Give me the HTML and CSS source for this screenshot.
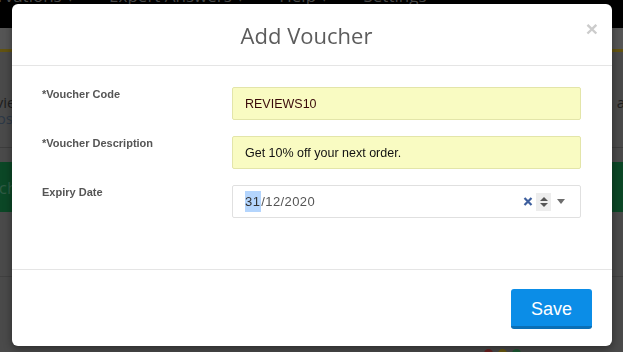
FILE: index.html
```html
<!DOCTYPE html>
<html lang="en">
<head>
<meta charset="utf-8">
<title>Add Voucher</title>
<link rel="stylesheet" href="styles.css">
</head>
<body>
<div class="page">
  <nav class="topnav">
    <span class="nav-item first">Reservations ▾</span>
    <span class="nav-item">Expert Answers ▾</span>
    <span class="nav-item">Help ▾</span>
    <span class="nav-item">Settings</span>
  </nav>
  <div class="subbar"></div>
  <div class="intro">
    <div class="intro-row">
      <p class="intro-text">Reviews</p>
      <p class="intro-side">a</p>
    </div>
    <p class="intro-link">Boost</p>
  </div>
  <div class="green-band"><span class="band-text">Vouch</span></div>
  <div class="gap-area"></div>
  <div class="bottom-area">
    <div class="dots">
      <span class="dot red"></span><span class="dot yellow"></span><span class="dot green"></span>
    </div>
  </div>
</div>

<div class="overlay">
  <div class="modal">
    <header class="modal-header">
      <h1 class="modal-title">Add Voucher</h1>
      <span class="close">×</span>
    </header>
    <div class="modal-body">
      <div class="form-row">
        <label class="form-label">*Voucher Code</label>
        <div class="input filled">REVIEWS10</div>
      </div>
      <div class="form-row">
        <label class="form-label">*Voucher Description</label>
        <div class="input filled desc">Get 10% off your next order.</div>
      </div>
      <div class="form-row">
        <label class="form-label">Expiry Date</label>
        <div class="input date">
          <span class="date-text"><span class="sel">31</span>/12/2020</span>
          <span class="date-controls">
            <svg class="clear" width="10" height="9" viewBox="0 0 10 9"><path d="M1.5 1 L8.5 8 M8.5 1 L1.5 8" stroke="#3e5f9e" stroke-width="2.2" stroke-linecap="butt"/></svg>
            <span class="spin"><svg width="10" height="14" viewBox="0 0 10 14"><path d="M1 6 L5 2 L9 6 Z M1 8 L5 12 L9 8 Z" fill="#555"/></svg></span>
            <svg class="drop" width="10" height="7" viewBox="0 0 10 7"><path d="M1 1 L9 1 L5 6 Z" fill="#6d6d6d"/></svg>
          </span>
        </div>
      </div>
    </div>
    <footer class="modal-footer">
      <button class="btn-save" type="button">Save</button>
    </footer>
  </div>
</div>
</body>
</html>
```
FILE: styles.css
```css
html, body {
  margin: 0;
  padding: 0;
}
body {
  background: #4a4a4a;
  font-family: "Liberation Sans", Arial, sans-serif;
  width: 623px;
  height: 352px;
  overflow: hidden;
}

/* Background page (dimmed) */
.page {
  display: flex;
  flex-direction: column;
  height: 352px;
}
.topnav {
  height: 28px;
  background: #000;
  display: flex;
  gap: 34px;
  overflow: hidden;
  flex: none;
}
.nav-item {
  color: #4a4a4a;
  font-family: "Open Sans", sans-serif;
  font-size: 17px;
  line-height: 17px;
  margin-top: -13px;
  white-space: nowrap;
}
.nav-item.first {
  margin-left: -40px;
}
.subbar {
  height: 21px;
  background: #555;
  border-bottom: 3px solid #625311;
  flex: none;
}
.intro {
  height: 96px;
  border-bottom: 1px solid #3d3d3d;
  padding-top: 42px;
  box-sizing: border-box;
  flex: none;
  font-family: "Open Sans", sans-serif;
  font-size: 15px;
}
.intro-row {
  display: flex;
  justify-content: space-between;
}
.intro-text {
  margin: 0 0 0 -22px;
  color: #1e1e1e;
  line-height: 16px;
}
.intro-side {
  margin: 0 -2px 0 0;
  color: #1e1e1e;
  line-height: 16px;
}
.intro-link {
  margin: 0 0 0 -22px;
  color: #2c3846;
  line-height: 16px;
}
.green-band {
  margin-top: 14px;
  height: 50px;
  background: #0b4726;
  flex: none;
  display: flex;
  align-items: center;
  overflow: hidden;
}
.band-text {
  color: #2f5a44;
  font-family: "Open Sans", sans-serif;
  font-size: 17px;
  margin-left: -32px;
}
.gap-area {
  height: 64px;
  border-bottom: 1px solid #404040;
  flex: none;
}
.bottom-area {
  flex: 1;
  position: relative;
}
.dots {
  position: absolute;
  left: 484px;
  top: 72px;
  display: flex;
  gap: 5px;
}
.dot {
  width: 9px;
  height: 9px;
  border-radius: 50%;
}
.dot.red { background: #6a2020; }
.dot.yellow { background: #6a5a10; }
.dot.green { background: #1d5a33; }

/* Modal */
.overlay {
  position: fixed;
  inset: 0;
}
.modal {
  position: absolute;
  left: 12px;
  top: 4px;
  width: 600px;
  height: 342px;
  background: #fff;
  border-radius: 6px;
  box-shadow: 0 3px 9px rgba(0, 0, 0, 0.4);
  display: flex;
  flex-direction: column;
  overflow: hidden;
}
.modal-header {
  height: 61px;
  border-bottom: 1px solid #e5e5e5;
  display: flex;
  align-items: center;
  justify-content: center;
  position: relative;
  flex: none;
}
.modal-title {
  margin: 0;
  font-family: "Open Sans", sans-serif;
  font-weight: 400;
  font-size: 22px;
  color: #5c5c5c;
  line-height: 1;
  padding: 1px 11px 0 0;
}
.close {
  position: absolute;
  right: 14px;
  top: 14px;
  font-family: "Liberation Sans", Arial, sans-serif;
  font-size: 21px;
  font-weight: bold;
  color: #cccccc;
  line-height: 21px;
}
.modal-body {
  flex: 1;
  padding: 21px 31px 0 30px;
  display: flex;
  flex-direction: column;
  gap: 16px;
}
.form-row {
  display: flex;
  align-items: flex-start;
}
.form-label {
  width: 190px;
  flex: none;
  font-size: 11px;
  font-weight: bold;
  color: #555;
  line-height: 13px;
  padding-top: 1px;
}
.input {
  flex: 1;
  height: 33px;
  box-sizing: border-box;
  border-radius: 2px;
  padding: 0 12px;
  display: flex;
  align-items: center;
  font-size: 12.5px;
}
.input.filled {
  background: #f9fbc2;
  border: 1px solid #e3e5a9;
  color: #3a0a0a;
}
.input.filled.desc {
  color: #111;
}
.input.date {
  background: #fff;
  border: 1px solid #e0e0e0;
  color: #555;
  justify-content: space-between;
  padding-right: 14px;
}
.date-text {
  font-size: 13px;
  letter-spacing: 0.4px;
}
.sel {
  background: #b4d5fd;
  color: #333;
  padding: 3px 1px 3px 0;
}
.date-controls {
  display: flex;
  align-items: center;
  gap: 2px;
}
.clear {
  display: block;
  margin-right: 1px;
}
.spin {
  width: 15px;
  height: 18px;
  background: #ededed;
  display: flex;
  align-items: center;
  justify-content: center;
}
.spin svg { display: block; }
.drop {
  display: block;
  margin-left: 3px;
}
.modal-footer {
  height: 77px;
  border-top: 1px solid #e5e5e5;
  flex: none;
  display: flex;
  justify-content: flex-end;
  align-items: flex-start;
  padding: 19px 20px 0 0;
  box-sizing: border-box;
}
.btn-save {
  width: 81px;
  height: 40px;
  background: #0b8de7;
  border: none;
  border-bottom: 3px solid #0a6fb6;
  border-radius: 3px;
  color: #fff;
  font-family: "Liberation Sans", Arial, sans-serif;
  font-size: 18px;
  padding: 0;
  line-height: 1;
  padding-top: 2px;
}
```
